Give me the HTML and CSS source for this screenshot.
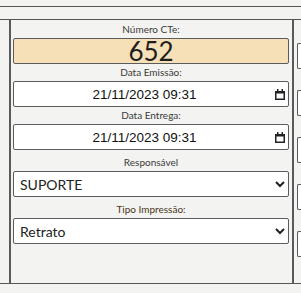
FILE: index.html
```html
<!DOCTYPE html>
<html lang="pt-BR">
<head>
  <meta charset="UTF-8" />
  <title>Emissão CTe</title>
  <link rel="stylesheet" href="styles.css">
</head>
<body>

  <!-- faixas do topo -->
  <div class="topo"></div>
  <div class="barra"></div>

  <div class="conteudo">
    <div class="coluna-esq"></div>

    <!-- painel central -->
    <div class="painel">
      <div class="campo">
        <label class="rotulo">Número CTe:</label>
        <input class="entrada numero" type="text" value="652" readonly />
      </div>

      <div class="campo">
        <label class="rotulo">Data Emissão:</label>
        <div class="entrada data">
          <span class="data-texto">21/11/2023 09:31</span>
          <svg class="calendario" width="10" height="11" viewBox="0 0 10 11">
            <rect x="0.75" y="2.75" width="8.5" height="7.5" fill="none" stroke="#222" stroke-width="1.5"/>
            <rect x="0" y="2" width="10" height="2.5" fill="#222"/>
            <rect x="2" y="0" width="1.5" height="3" fill="#222"/>
            <rect x="6.5" y="0" width="1.5" height="3" fill="#222"/>
          </svg>
        </div>
      </div>

      <div class="campo">
        <label class="rotulo">Data Entrega:</label>
        <div class="entrada data">
          <span class="data-texto">21/11/2023 09:31</span>
          <svg class="calendario" width="10" height="11" viewBox="0 0 10 11">
            <rect x="0.75" y="2.75" width="8.5" height="7.5" fill="none" stroke="#222" stroke-width="1.5"/>
            <rect x="0" y="2" width="10" height="2.5" fill="#222"/>
            <rect x="2" y="0" width="1.5" height="3" fill="#222"/>
            <rect x="6.5" y="0" width="1.5" height="3" fill="#222"/>
          </svg>
        </div>
      </div>

      <div class="campo campo-select">
        <label class="rotulo">Responsável</label>
        <select class="entrada escolha">
          <option>SUPORTE</option>
        </select>
      </div>

      <div class="campo campo-select">
        <label class="rotulo rotulo-tipo">Tipo Impressão:</label>
        <select class="entrada escolha">
          <option>Retrato</option>
          <option>Paisagem</option>
        </select>
      </div>
    </div>

    <!-- inicio do painel da direita -->
    <div class="coluna-dir">
      <div class="caixa"></div>
      <div class="caixa"></div>
      <div class="caixa"></div>
      <div class="caixa"></div>
      <div class="caixa"></div>
    </div>
  </div>

  <div class="rodape"></div>

</body>
</html>
```

FILE: styles.css
```css
body, html {
  margin: 0; padding: 0;
  height: 100%;
  font-family: 'Lato', sans-serif;
  background-color: #f3f3f1;
  color: #333;
  overflow: hidden;
}
.topo {
  height: 6px;
  border-bottom: 1px solid #555;
}
.barra {
  height: 12px;
  border-bottom: 1px solid #555;
}
.conteudo {
  display: flex;
  height: 263px;
  border-bottom: 1px solid #555;
}
.coluna-esq {
  width: 9px;
  border-right: 2px solid #5a5a5a;
}
.painel {
  width: 276px;
  padding: 1px 3px 0 2px;
  display: flex;
  flex-direction: column;
}
.campo {
  display: flex;
  flex-direction: column;
}
.campo-select {
  margin-top: 4px;
}
.rotulo {
  display: block;
  height: 17px;
  line-height: 17px;
  font-size: 10px;
  text-align: center;
  color: #3a3a3a;
}
.rotulo-tipo {
  color: #4a3520;
}
.entrada {
  box-sizing: border-box;
  width: 276px;
  height: 26px;
  margin: 0;
  border: 1px solid #5c5c5c;
  border-radius: 2px;
  background: #fff;
  color: #222;
  outline: none;
}
.numero {
  background: #f6e0b8;
  font-family: 'Lato', sans-serif;
  font-size: 26px;
  text-align: center;
  padding: 0;
  color: #1e1e1e;
}
.data {
  display: flex;
  align-items: center;
}
.data-texto {
  flex: 1;
  text-align: center;
  font-family: 'Liberation Sans', Arial, sans-serif;
  font-size: 13.5px;
  color: #111;
}
.calendario {
  margin-right: 3px;
}
.escolha {
  font-family: 'Lato', sans-serif;
  font-size: 14px;
  padding: 0 2px;
}
.coluna-dir {
  flex: 1;
  border-left: 2px solid #5a5a5a;
  padding: 23px 0 0 3px;
  display: flex;
  flex-direction: column;
  gap: 21px;
}
.caixa {
  height: 26px;
  border: 1px solid #5c5c5c;
  border-right: none;
  border-radius: 2px 0 0 2px;
  background: #fff;
  box-sizing: border-box;
}
.rodape {
  height: 9px;
}
```
